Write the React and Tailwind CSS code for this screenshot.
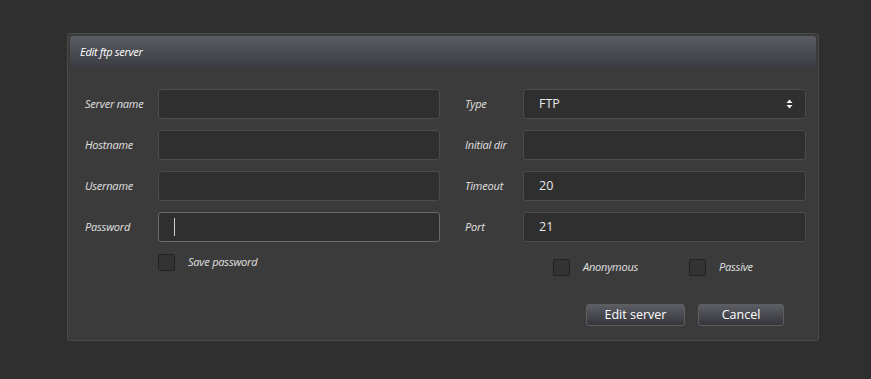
import React from "react";

const labelCls =
  "italic text-[11px] text-[#e0e0e0] tracking-[-0.2px]";

function Field({ label, labelW, value, focused, caret, select }) {
  return (
    <div className="flex items-center h-[30px]">
      <div className={`${labelCls} shrink-0`} style={{ width: labelW }}>
        {label}
      </div>
      <div
        className={`flex-1 h-[30px] rounded-[3px] bg-[#2f2f2f] border ${
          focused ? "border-[#6a6a6a]" : "border-[#4c4c4c]"
        } flex items-center pl-[15px] pr-[12px] text-[12.5px] text-[#e8e8e8]`}
      >
        {caret && <div className="w-px h-[18px] bg-[#cfcfcf]" />}
        <span>{value}</span>
        {select && (
          <svg className="ml-auto" width="7" height="10" viewBox="0 0 7 10">
            <path d="M3.5 0.5 L6.5 4 L0.5 4 Z" fill="#f0f0f0" />
            <path d="M3.5 9.5 L6.5 6 L0.5 6 Z" fill="#f0f0f0" />
          </svg>
        )}
      </div>
    </div>
  );
}

function Check({ label, className = "" }) {
  return (
    <div className={`flex items-center ${className}`}>
      <div className="w-[17px] h-[17px] rounded-[2px] bg-[#333333] border border-[#232323]" />
      <span className={`${labelCls} ml-[13px]`}>{label}</span>
    </div>
  );
}

function Btn({ children, w }) {
  return (
    <div
      className="h-[22px] rounded-[3px] border border-[#5e5e5e] bg-gradient-to-b from-[#5c5e65] to-[#35363b] flex items-center justify-center text-[12.5px] text-white"
      style={{ width: w }}
    >
      {children}
    </div>
  );
}

export default function App() {
  return (
    <div
      className="w-[871px] h-[379px] bg-[#2f2f2f] pt-[33px] pl-[67px]"
      style={{ fontFamily: '"Open Sans", "Noto Sans", sans-serif' }}
    >
      <div className="w-[752px] h-[308px] border border-[#4a4a4a] rounded-[3px] p-[2px] bg-[#3b3b3b]">
        <div className="h-[32px] rounded-t-[3px] bg-gradient-to-b from-[#5b5d64] to-[#3b3c41] flex items-center pl-[10px]">
          <span className="italic text-[11px] text-white tracking-[-0.3px]">
            Edit ftp server
          </span>
        </div>
        <div className="flex pt-[21px] pl-[15px]">
          <div className="w-[355px] flex flex-col">
            <div className="flex flex-col gap-[11px]">
              <Field label="Server name" labelW={73} />
              <Field label="Hostname" labelW={73} />
              <Field label="Username" labelW={73} />
              <Field label="Password" labelW={73} focused caret />
            </div>
            <div className="mt-[12px] pl-[73px]">
              <Check label="Save password" />
            </div>
          </div>
          <div className="w-[341px] ml-[25px] flex flex-col">
            <div className="flex flex-col gap-[11px]">
              <Field label="Type" labelW={58} value="FTP" select />
              <Field label="Initial dir" labelW={58} />
              <Field label="Timeout" labelW={58} value="20" />
              <Field label="Port" labelW={58} value="21" />
            </div>
            <div className="mt-[17px] pl-[88px] flex">
              <Check label="Anonymous" className="w-[136px]" />
              <Check label="Passive" />
            </div>
            <div className="mt-[28px] flex justify-end gap-[13px] pr-[22px]">
              <Btn w={99}>Edit server</Btn>
              <Btn w={86}>Cancel</Btn>
            </div>
          </div>
        </div>
      </div>
    </div>
  );
}
